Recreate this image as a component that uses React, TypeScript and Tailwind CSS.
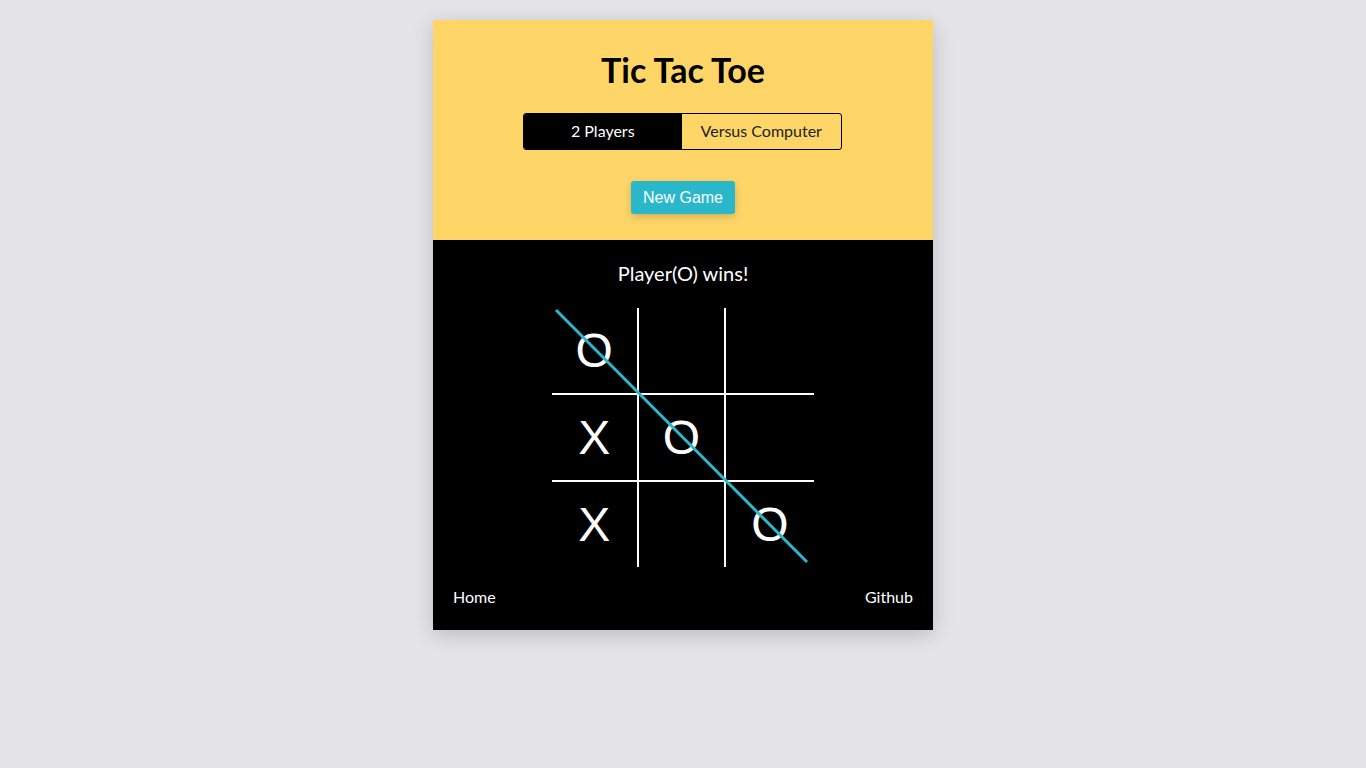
import React from "react";

type Cell = "X" | "O" | "";

const board: Cell[] = ["O", "", "", "X", "O", "", "X", "", "O"];

const Square = ({ value, index }: { value: Cell; index: number }) => {
  const col = index % 3;
  const row = Math.floor(index / 3);
  return (
    <div
      className={`flex items-center justify-center text-white text-[48px] leading-none font-['Liberation_Sans',Arial,sans-serif] border-white ${
        col < 2 ? "border-r-2" : ""
      } ${row < 2 ? "border-b-2 h-[87px]" : "h-[85px]"}`}
    >
      {value}
    </div>
  );
};

const App = () => {
  return (
    <div className="min-h-screen w-full bg-[#e5e4e9] pt-5 font-['Lato','Noto_Sans',sans-serif]">
      <div className="mx-auto w-[500px] shadow-[0_5px_20px_rgba(0,0,0,0.18)]">
        <div className="bg-[#fed668] h-[220px] pt-[31px] flex flex-col items-center">
          <h1 className="text-[34px] leading-[38px] font-bold text-black">
            Tic Tac Toe
          </h1>
          <div className="mt-[24px] -ml-[2px] flex w-[319px] h-[37px] border border-black rounded-[3px] overflow-hidden text-base">
            <button className="flex-1 bg-black text-white pb-[2px]">
              2 Players
            </button>
            <button className="flex-1 text-[#222] pb-[2px]">
              Versus Computer
            </button>
          </div>
          <button className="mt-[31px] h-[33px] w-[104px] rounded-[3px] bg-[#2ab7ca] text-white text-[16px] font-['Liberation_Sans',Arial,sans-serif] shadow-[0_3px_8px_rgba(0,0,0,0.18)]">
            New Game
          </button>
        </div>
        <div className="bg-black h-[390px] pt-5 flex flex-col items-center">
          <p className="text-white text-xl leading-6 mt-[1px]">
            Player(O) wins!
          </p>
          <div className="relative mt-[23px] -ml-[1px] w-[262px] grid grid-cols-3">
            {board.map((v, i) => (
              <Square key={i} value={v} index={i} />
            ))}
            <svg
              className="absolute left-0 top-0 pointer-events-none"
              width="262"
              height="259"
              viewBox="0 0 262 259"
            >
              <line
                x1="4"
                y1="2"
                x2="255"
                y2="254"
                stroke="#2ab7ca"
                strokeWidth="3"
              />
            </svg>
          </div>
          <div className="w-full mt-[18px] px-5 flex justify-between text-white text-base leading-6">
            <a href="#">Home</a>
            <a href="#">Github</a>
          </div>
        </div>
      </div>
    </div>
  );
};

export default App;
